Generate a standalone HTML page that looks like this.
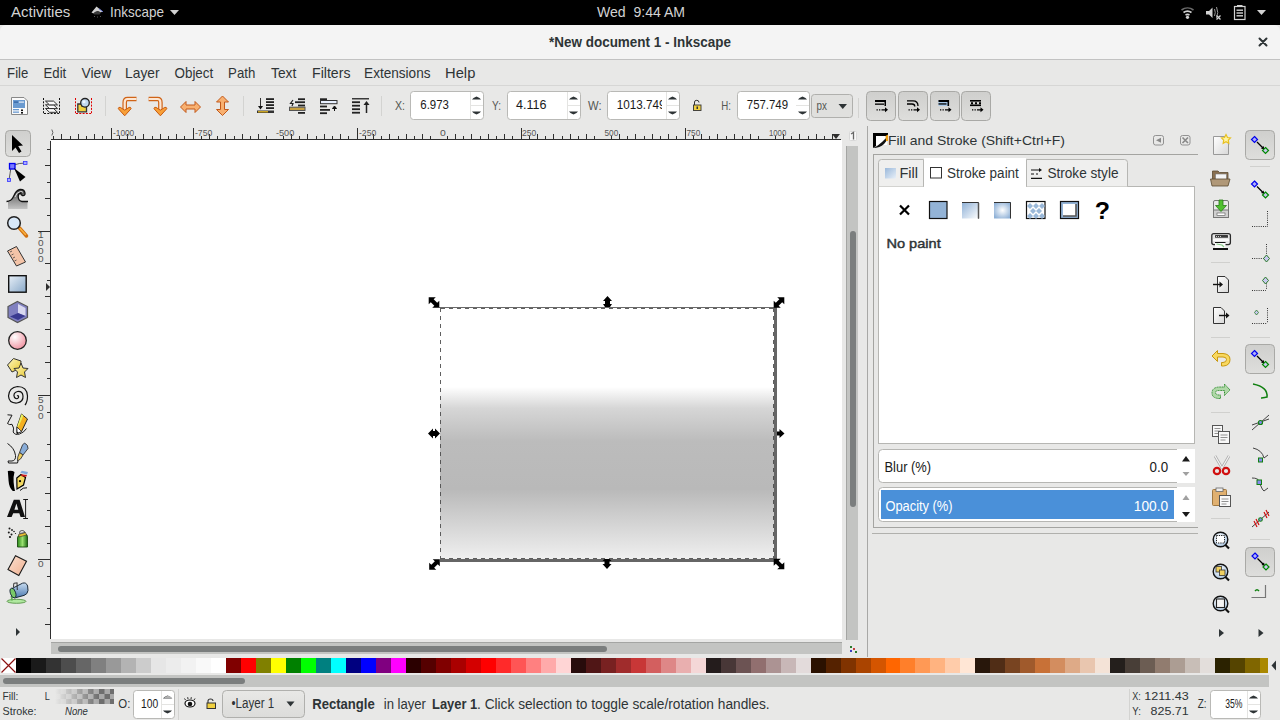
<!DOCTYPE html>
<html><head><meta charset="utf-8"><style>
*{margin:0;padding:0}
html,body{width:1280px;height:720px;overflow:hidden;background:#e8e8e7}
svg{position:absolute;left:0;top:0;font-family:"Liberation Sans",sans-serif}
</style></head><body>
<svg width="1280" height="720" viewBox="0 0 1280 720">
<rect x="0" y="0" width="1280" height="25" fill="#000" />
<text x="11.00" y="17" font-size="14.5" fill="#d3d3d3" textLength="59.26" lengthAdjust="spacingAndGlyphs" >Activities</text>
<text x="110.07" y="17" font-size="14.5" fill="#d3d3d3" textLength="53.99" lengthAdjust="spacingAndGlyphs" >Inkscape</text>
<path d="M170 10 L179 10 L174.5 15 Z" fill="#d3d3d3"/>
<path d="M91.5 12.5 L96.5 6.5 L102.5 11.5 L100.5 12.5 Q97 9.5 93.5 13.5 Z" fill="#d0d0d0"/><path d="M99 8.8 L103 11.8" stroke="#6a78d8" stroke-width="1"/><path d="M93 13.5 Q97 10 101 12.5 L99.5 14.5 L94.5 14.5Z" fill="#3a3a3a"/><g fill="#555"><rect x="94" y="16" width="1" height="1"/><rect x="97" y="16.5" width="1" height="1"/><rect x="100" y="16" width="1" height="1"/></g>
<text x="597.00" y="17" font-size="14.5" fill="#d3d3d3" textLength="88.04" lengthAdjust="spacingAndGlyphs" >Wed  9:44 AM</text>
<g fill="none" stroke="#d3d3d3" stroke-width="1.6"><path d="M1181.5 10 A10 10 0 0 1 1193.5 10" opacity=".5"/><path d="M1183.5 12.5 A7 7 0 0 1 1191.5 12.5"/><path d="M1185.5 15 A4 4 0 0 1 1189.5 15"/></g><circle cx="1187.5" cy="17.3" r="1.6" fill="#d3d3d3"/>
<path d="M1206 11 L1209 11 L1212.5 7.5 L1212.5 18 L1209 14.5 L1206 14.5Z" fill="#d3d3d3"/><path d="M1214.5 9 Q1216 12.5 1214.5 16 M1216.5 7 Q1219 12.5 1216.5 18" stroke="#999" stroke-width="1" fill="none"/><path d="M1216.5 15.5 L1220.5 19.5 M1220.5 15.5 L1216.5 19.5" stroke="#d3d3d3" stroke-width="1.3"/>
<rect x="1234.5" y="6.5" width="10.5" height="13" fill="none" stroke="#d3d3d3" stroke-width="1.2"/><rect x="1237" y="5" width="5.5" height="2" fill="#d3d3d3"/><rect x="1236.5" y="9.5" width="6.5" height="1.4" fill="#d3d3d3"/><rect x="1236.5" y="12.3" width="6.5" height="1.4" fill="#d3d3d3"/><rect x="1236.5" y="15.1" width="6.5" height="1.4" fill="#d3d3d3"/>
<path d="M1257 10 L1266 10 L1261.5 15 Z" fill="#d3d3d3"/>
<path d="M0 31 A6 6 0 0 1 6 25 L1274 25 A6 6 0 0 1 1280 31 L1280 59 L0 59 Z" fill="#f4f4f4"/>
<rect x="0" y="59" width="1280" height="1" fill="#c2c2c2" />
<text x="549.00" y="47" font-size="14.3" fill="#2e3436" font-weight="bold" textLength="181.95" lengthAdjust="spacingAndGlyphs" >*New document 1 - Inkscape</text>
<path d="M1259.5 38.5 L1266.5 45.5 M1266.5 38.5 L1259.5 45.5" stroke="#2e3436" stroke-width="2" stroke-linecap="round"/>
<rect x="0" y="60" width="1280" height="25" fill="#e8e8e7" />
<text x="7.12" y="78" font-size="15" fill="#2e3436" textLength="21.18" lengthAdjust="spacingAndGlyphs" >File</text>
<text x="43.62" y="78" font-size="15" fill="#2e3436" textLength="22.65" lengthAdjust="spacingAndGlyphs" >Edit</text>
<text x="81.50" y="78" font-size="15" fill="#2e3436" textLength="29.84" lengthAdjust="spacingAndGlyphs" >View</text>
<text x="125.08" y="78" font-size="15" fill="#2e3436" textLength="34.41" lengthAdjust="spacingAndGlyphs" >Layer</text>
<text x="174.50" y="78" font-size="15" fill="#2e3436" textLength="38.76" lengthAdjust="spacingAndGlyphs" >Object</text>
<text x="228.12" y="78" font-size="15" fill="#2e3436" textLength="27.18" lengthAdjust="spacingAndGlyphs" >Path</text>
<text x="271.00" y="78" font-size="15" fill="#2e3436" textLength="25.24" lengthAdjust="spacingAndGlyphs" >Text</text>
<text x="312.06" y="78" font-size="15" fill="#2e3436" textLength="38.41" lengthAdjust="spacingAndGlyphs" >Filters</text>
<text x="364.10" y="78" font-size="15" fill="#2e3436" textLength="66.36" lengthAdjust="spacingAndGlyphs" >Extensions</text>
<text x="445.02" y="78" font-size="15" fill="#2e3436" textLength="30.32" lengthAdjust="spacingAndGlyphs" >Help</text>
<rect x="0" y="85" width="1280" height="1" fill="#d6d6d5" />
<rect x="105" y="96" width="1" height="20" fill="#d3d3d1" />
<rect x="243" y="96" width="1" height="20" fill="#d3d3d1" />
<rect x="381" y="96" width="1" height="20" fill="#d3d3d1" />
<rect x="858" y="98" width="1" height="20" fill="#d3d3d1" />
<path d="M11.5 97.5 L24 97.5 L27.5 101 L27.5 114.5 L11.5 114.5 Z" fill="#fafafa" stroke="#888" stroke-width="1"/>
<rect x="13" y="100" width="12" height="8" fill="#6a9ad0" />
<rect x="14" y="101.5" width="4" height="1.2" fill="#2f5f9f" />
<rect x="19" y="101.5" width="5" height="1.2" fill="#e8eef8" />
<rect x="13" y="109" width="6" height="1.3" fill="#6a9ad0" />
<rect x="13" y="111.5" width="6" height="1.3" fill="#6a9ad0" />
<rect x="21" y="109.5" width="2" height="1.6" fill="#111" />
<rect x="21" y="112" width="2" height="1.6" fill="#111" />
<path d="M43.5 98 V114 M59.5 98 V114 M44 113.5 H59" stroke="#111" stroke-width="1" stroke-dasharray="2,1.3" fill="none"/>
<path d="M45.5 108.5 L53.5 108.5 L57.5 112.3 L49.5 112.3 Z" fill="#fafafa" stroke="#1a1a1a" stroke-width="0.9"/>
<path d="M45.5 104.8 L53.5 104.8 L57.5 108.6 L49.5 108.6 Z" fill="#fafafa" stroke="#1a1a1a" stroke-width="0.9"/>
<path d="M45.5 101.1 L53.5 101.1 L57.5 104.89999999999999 L49.5 104.89999999999999 Z" fill="#fafafa" stroke="#1a1a1a" stroke-width="0.9"/>
<path d="M75.5 98 V114 M91.5 98 V114 M76 113.5 H91" stroke="#e00000" stroke-width="1" stroke-dasharray="2,1.3" fill="none"/>
<path d="M77.8 104 L82 104 L82 106 L86.5 106 L86.5 111.8 L77.8 111.8 Z" fill="#f0d040" stroke="#333" stroke-width="1.3"/>
<circle cx="85" cy="102.8" r="4.3" fill="#c0d8f0" stroke="#222" stroke-width="1.3"/><circle cx="84" cy="101.8" r="1.5" fill="#eef6ff"/>
<g><path d="M136.5 99 L127.5 99 Q124.7 99 124.7 102.5 L124.7 109.5" stroke="#d06418" stroke-width="4.6" fill="none"/><path d="M136.5 99 L127.5 99 Q124.7 99 124.7 102.5 L124.7 109.5" stroke="#fde6d2" stroke-width="2.2" fill="none"/><path d="M118.3 108.7 Q118.5 106.8 120.3 107.4 L124.7 110.2 L129.1 107.4 Q130.9 106.8 131.1 108.7 L124.7 115.8 Z" fill="#f8a038" stroke="#c85a10" stroke-width="1"/></g>
<g transform="matrix(-1 0 0 1 285.1 0)"><path d="M136.5 99 L127.5 99 Q124.7 99 124.7 102.5 L124.7 109.5" stroke="#d06418" stroke-width="4.6" fill="none"/><path d="M136.5 99 L127.5 99 Q124.7 99 124.7 102.5 L124.7 109.5" stroke="#fde6d2" stroke-width="2.2" fill="none"/><path d="M118.3 108.7 Q118.5 106.8 120.3 107.4 L124.7 110.2 L129.1 107.4 Q130.9 106.8 131.1 108.7 L124.7 115.8 Z" fill="#f8a038" stroke="#c85a10" stroke-width="1"/></g>
<path d="M180.5 107 L186 101.5 L186 105 L195 105 L195 101.5 L200.5 107 L195 112.5 L195 109 L186 109 L186 112.5 Z" stroke="#c2591a" stroke-width="1" fill="#f8b070"/>
<path d="M222.5 96 L228.5 102 L224.5 102 L224.5 109.5 L228.5 109.5 L222.5 115.5 L216.5 109.5 L220.5 109.5 L220.5 102 L216.5 102 Z" stroke="#c2591a" stroke-width="1" fill="#f8b070"/>
<path d="M260.5 98 L260.5 107" stroke="#333" stroke-width="1"/><path d="M258 106 L263 106 L260.5 109.5Z" fill="#111"/>
<rect x="266" y="98.2" width="8" height="1.8" fill="#222" />
<rect x="266" y="101.2" width="8" height="1.8" fill="#222" />
<rect x="266" y="104.2" width="8" height="1.8" fill="#222" />
<rect x="266" y="107.2" width="8" height="1.8" fill="#222" />
<rect x="257" y="110.5" width="17" height="2.5" fill="#333" />
<rect x="258" y="111.2" width="10" height="1.2" fill="#f0c020" />
<rect x="298" y="98.3" width="7" height="1.8" fill="#222" />
<rect x="295" y="101.3" width="10" height="1.8" fill="#222" />
<rect x="298" y="104.6" width="7" height="1.8" fill="#222" />
<rect x="298" y="112" width="7" height="1.8" fill="#222" />
<rect x="289.5" y="107.2" width="15.5" height="3.3" fill="#c8a040" stroke="#555" stroke-width="1"/>
<path d="M293 100 L290.5 103.5 L293 103.5 L292 106" stroke="#222" stroke-width="1.2" fill="none"/>
<rect x="320" y="98.3" width="7" height="1.8" fill="#222" />
<rect x="320" y="105.6" width="7" height="1.8" fill="#222" />
<rect x="320" y="109" width="10" height="1.8" fill="#222" />
<rect x="320" y="112.3" width="7" height="1.8" fill="#222" />
<rect x="320.5" y="100.5" width="16.5" height="3.2" fill="#e8f0ff" stroke="#333" stroke-width="1"/>
<path d="M334.5 106 L336.5 108.5 L332.5 108.5 Z M334.5 108 L334.5 111" fill="#111" stroke="#111" stroke-width="1"/>
<rect x="352" y="98" width="17" height="1.5" fill="#3a3a3a" />
<rect x="352" y="101.3" width="8" height="1.8" fill="#222" />
<rect x="352" y="104.8" width="8" height="1.8" fill="#222" />
<rect x="352" y="108.3" width="8" height="1.8" fill="#222" />
<rect x="352" y="111.8" width="8" height="1.8" fill="#222" />
<path d="M366.5 113 L366.5 104" stroke="#222" stroke-width="1.5"/><path d="M363.5 105 L369.5 105 L366.5 101Z" fill="#222"/>
<rect x="410.5" y="91.5" width="73" height="28" rx="3" fill="#fff" stroke="#b9b9b6" stroke-width="1"/>
<rect x="470" y="92" width="1" height="27" fill="#e4e4e2" />
<rect x="470" y="105" width="13" height="1" fill="#e4e4e2" />
<path d="M472.0 99.5 L481.0 99.5 L479.5 98 L476.5 96.5 L473.5 98 Z" fill="#2e3436"/>
<path d="M472.0 111.5 L481.0 111.5 L479.5 113 L476.5 114.5 L473.5 113 Z" fill="#2e3436"/>
<rect x="507.5" y="91.5" width="73" height="28" rx="3" fill="#fff" stroke="#b9b9b6" stroke-width="1"/>
<rect x="567" y="92" width="1" height="27" fill="#e4e4e2" />
<rect x="567" y="105" width="13" height="1" fill="#e4e4e2" />
<path d="M569.0 99.5 L578.0 99.5 L576.5 98 L573.5 96.5 L570.5 98 Z" fill="#2e3436"/>
<path d="M569.0 111.5 L578.0 111.5 L576.5 113 L573.5 114.5 L570.5 113 Z" fill="#2e3436"/>
<rect x="607.5" y="91.5" width="72" height="28" rx="3" fill="#fff" stroke="#b9b9b6" stroke-width="1"/>
<rect x="666" y="92" width="1" height="27" fill="#e4e4e2" />
<rect x="666" y="105" width="13" height="1" fill="#e4e4e2" />
<path d="M668.0 99.5 L677.0 99.5 L675.5 98 L672.5 96.5 L669.5 98 Z" fill="#2e3436"/>
<path d="M668.0 111.5 L677.0 111.5 L675.5 113 L672.5 114.5 L669.5 113 Z" fill="#2e3436"/>
<rect x="737.5" y="91.5" width="72" height="28" rx="3" fill="#fff" stroke="#b9b9b6" stroke-width="1"/>
<rect x="796" y="105" width="13" height="1" fill="#e4e4e2" />
<path d="M798.0 99.5 L807.0 99.5 L805.5 98 L802.5 96.5 L799.5 98 Z" fill="#2e3436"/>
<path d="M798.0 111.5 L807.0 111.5 L805.5 113 L802.5 114.5 L799.5 113 Z" fill="#2e3436"/>
<text x="395.00" y="110" font-size="13" fill="#555753" textLength="10.00" lengthAdjust="spacingAndGlyphs" >X:</text>
<text x="492.00" y="110" font-size="13" fill="#555753" textLength="8.97" lengthAdjust="spacingAndGlyphs" >Y:</text>
<text x="588.00" y="110" font-size="13" fill="#555753" textLength="13.53" lengthAdjust="spacingAndGlyphs" >W:</text>
<text x="721.25" y="110" font-size="13" fill="#555753" textLength="9.70" lengthAdjust="spacingAndGlyphs" >H:</text>
<text x="420.30" y="109" font-size="13.5" fill="#1a1a1a" textLength="28.63" lengthAdjust="spacingAndGlyphs" >6.973</text>
<text x="516.00" y="109" font-size="13.5" fill="#1a1a1a" textLength="30.47" lengthAdjust="spacingAndGlyphs" >4.116</text>
<text x="616.63" y="109" font-size="13.5" fill="#1a1a1a" textLength="48.81" lengthAdjust="spacingAndGlyphs" >1013.749</text>
<text x="746.80" y="109" font-size="13.5" fill="#1a1a1a" textLength="41.23" lengthAdjust="spacingAndGlyphs" >757.749</text>
<rect x="662" y="93" width="4" height="25" fill="#fff" />
<path d="M694.5 105 L694.5 102 Q694.5 100.3 696.8 100.3 Q699 100.3 699 102.5" fill="none" stroke="#333" stroke-width="1"/>
<rect x="693.5" y="105" width="7.5" height="5.5" fill="#f0d040" stroke="#333" stroke-width=".9"/><rect x="696.5" y="106.5" width="1.5" height="2.5" fill="#333"/>
<rect x="811.5" y="94.5" width="41" height="23" rx="3" fill="#e0e0de" stroke="#b0b0ad" stroke-width="1"/>
<text x="816.40" y="109.5" font-size="13.5" fill="#555753" textLength="10.42" lengthAdjust="spacingAndGlyphs" >px</text>
<path d="M838.5 104 L847 104 L842.75 109 Z" fill="#2e3436"/>
<rect x="866.5" y="91.5" width="29" height="29" rx="4" fill="url(#btng)" stroke="#a9a9a6" stroke-width="1"/>
<rect x="898.5" y="91.5" width="29" height="29" rx="4" fill="url(#btng)" stroke="#a9a9a6" stroke-width="1"/>
<rect x="930.5" y="91.5" width="29" height="29" rx="4" fill="url(#btng)" stroke="#a9a9a6" stroke-width="1"/>
<rect x="961.5" y="91.5" width="29" height="29" rx="4" fill="url(#btng)" stroke="#a9a9a6" stroke-width="1"/>
<defs><linearGradient id="btng" x1="0" y1="0" x2="0" y2="1"><stop offset="0" stop-color="#cfcfcd"/><stop offset="1" stop-color="#dededc"/></linearGradient></defs>
<rect x="875" y="100" width="11" height="2" fill="#000" />
<rect x="875" y="103.5" width="9" height="1.3" fill="#000" />
<rect x="884.5" y="100" width="1.5" height="6" fill="#000" />
<path d="M876.5 109.8 h1.3 M879.0 109.8 h1.3 M881.5 109.8 h4" stroke="#000" stroke-width="1.3"/><path d="M885.0 107.3 L888.0 109.8 L885.0 112.3Z" fill="#000"/>
<path d="M907 100.8 L913 100.8 Q918 100.8 918 106 M907 104 L912 104 Q914.8 104 914.8 106.5" fill="none" stroke="#000" stroke-width="1.3"/>
<path d="M908.5 109.8 h1.3 M911.0 109.8 h1.3 M913.5 109.8 h4" stroke="#000" stroke-width="1.3"/><path d="M917.0 107.3 L920.0 109.8 L917.0 112.3Z" fill="#000"/>
<rect x="938.5" y="100" width="10.5" height="6" fill="#a8c8e8"/>
<rect x="938.5" y="100" width="10.5" height="2" fill="#000" />
<rect x="938.5" y="103.3" width="8" height="1.3" fill="#000" />
<rect x="947.5" y="100" width="1.6" height="6" fill="#000" />
<path d="M940 109.8 h1.3 M942.5 109.8 h1.3 M945 109.8 h4" stroke="#000" stroke-width="1.3"/><path d="M948.5 107.3 L951.5 109.8 L948.5 112.3Z" fill="#000"/>
<rect x="970" y="100" width="11" height="1.6" fill="#000" />
<rect x="970" y="104.5" width="11" height="1.6" fill="#000" />
<path d="M971 103.3 h2 M975 103.3 h2 M979 103.3 h2" stroke="#000" stroke-width="2"/>
<path d="M972 109.8 h1.3 M974.5 109.8 h1.3 M977 109.8 h4" stroke="#000" stroke-width="1.3"/><path d="M980.5 107.3 L983.5 109.8 L980.5 112.3Z" fill="#000"/>
<rect x="51" y="140" width="791" height="499" fill="#fff" />
<rect x="51" y="139" width="790" height="1" fill="#2e2e2e" />
<rect x="50" y="141" width="1" height="498" fill="#2e2e2e" />
<path d="M53.5 136 V139 M61.5 134 V139 M70.5 136 V139 M78.5 134 V139 M86.5 136 V139 M94.5 134 V139 M102.5 136 V139 M111.5 128 V139 M119.5 136 V139 M127.5 134 V139 M135.5 136 V139 M143.5 134 V139 M152.5 136 V139 M160.5 134 V139 M168.5 136 V139 M176.5 134 V139 M184.5 136 V139 M193.5 128 V139 M201.5 136 V139 M209.5 134 V139 M217.5 136 V139 M225.5 134 V139 M234.5 136 V139 M242.5 134 V139 M250.5 136 V139 M258.5 134 V139 M266.5 136 V139 M283.5 136 V139 M291.5 134 V139 M299.5 136 V139 M307.5 134 V139 M316.5 136 V139 M324.5 134 V139 M332.5 136 V139 M340.5 134 V139 M348.5 136 V139 M357.5 128 V139 M365.5 136 V139 M373.5 134 V139 M381.5 136 V139 M389.5 134 V139 M398.5 136 V139 M406.5 134 V139 M414.5 136 V139 M422.5 134 V139 M430.5 136 V139 M447.5 136 V139 M455.5 134 V139 M463.5 136 V139 M471.5 134 V139 M480.5 136 V139 M488.5 134 V139 M496.5 136 V139 M504.5 134 V139 M512.5 136 V139 M521.5 128 V139 M529.5 136 V139 M537.5 134 V139 M545.5 136 V139 M553.5 134 V139 M562.5 136 V139 M570.5 134 V139 M578.5 136 V139 M586.5 134 V139 M594.5 136 V139 M611.5 136 V139 M619.5 134 V139 M627.5 136 V139 M635.5 134 V139 M644.5 136 V139 M652.5 134 V139 M660.5 136 V139 M668.5 134 V139 M676.5 136 V139 M685.5 128 V139 M693.5 136 V139 M701.5 134 V139 M709.5 136 V139 M717.5 134 V139 M726.5 136 V139 M734.5 134 V139 M742.5 136 V139 M750.5 134 V139 M758.5 136 V139 M775.5 136 V139 M783.5 134 V139 M791.5 136 V139 M799.5 134 V139 M808.5 136 V139 M816.5 134 V139 M824.5 136 V139 M832.5 134 V139" stroke="#2e2e2e" stroke-width="1"/>
<text x="113.00" y="136" font-size="9.5" fill="#555555" textLength="21.25" lengthAdjust="spacingAndGlyphs" >-1000</text>
<text x="195.00" y="136" font-size="9.5" fill="#555555" textLength="17.26" lengthAdjust="spacingAndGlyphs" >-750</text>
<text x="276.00" y="136" font-size="9.5" fill="#555555" textLength="18.27" lengthAdjust="spacingAndGlyphs" >-500</text>
<text x="359.00" y="136" font-size="9.5" fill="#555555" textLength="17.26" lengthAdjust="spacingAndGlyphs" >-250</text>
<text x="440.00" y="136" font-size="9.5" fill="#555555" textLength="5.81" lengthAdjust="spacingAndGlyphs" >0</text>
<text x="522.00" y="136" font-size="9.5" fill="#555555" textLength="14.25" lengthAdjust="spacingAndGlyphs" >250</text>
<text x="604.50" y="136" font-size="9.5" fill="#555555" textLength="13.75" lengthAdjust="spacingAndGlyphs" >500</text>
<text x="686.50" y="136" font-size="9.5" fill="#555555" textLength="13.75" lengthAdjust="spacingAndGlyphs" >750</text>
<text x="769.00" y="136" font-size="9.5" fill="#555555" textLength="17.23" lengthAdjust="spacingAndGlyphs" >1000</text>
<path d="M51.8 129.5 Q54 132.5 51.8 135.5" stroke="#666" stroke-width="1" fill="none"/>
<path d="M832 134 L840 134 L836 139 Z" fill="#2e2e2e"/>
<path d="M47 149.5 H50 M45 165.5 H50 M47 182.5 H50 M45 198.5 H50 M47 215.5 H50 M38 231.5 H50 M45 263.5 H50 M47 280.5 H50 M45 296.5 H50 M47 313.5 H50 M45 329.5 H50 M47 346.5 H50 M45 362.5 H50 M47 378.5 H50 M38 395.5 H50 M47 412.5 H50 M47 444.5 H50 M45 460.5 H50 M47 477.5 H50 M45 493.5 H50 M47 510.5 H50 M45 526.5 H50 M47 543.5 H50 M38 559.5 H50 M47 576.5 H50 M47 608.5 H50 M45 624.5 H50" stroke="#2e2e2e" stroke-width="1"/>
<text x="38.00" y="238" font-size="9.5" fill="#555555" textLength="5.60" lengthAdjust="spacingAndGlyphs" >1</text>
<text x="38.00" y="246" font-size="9.5" fill="#555555" textLength="5.60" lengthAdjust="spacingAndGlyphs" >0</text>
<text x="38.00" y="254" font-size="9.5" fill="#555555" textLength="5.60" lengthAdjust="spacingAndGlyphs" >0</text>
<text x="38.00" y="262" font-size="9.5" fill="#555555" textLength="5.60" lengthAdjust="spacingAndGlyphs" >0</text>
<text x="38.00" y="403" font-size="9.5" fill="#555555" textLength="5.60" lengthAdjust="spacingAndGlyphs" >5</text>
<text x="38.00" y="411" font-size="9.5" fill="#555555" textLength="5.60" lengthAdjust="spacingAndGlyphs" >0</text>
<text x="38.00" y="419" font-size="9.5" fill="#555555" textLength="5.60" lengthAdjust="spacingAndGlyphs" >0</text>
<text x="38.00" y="567" font-size="9.5" fill="#555555" textLength="5.60" lengthAdjust="spacingAndGlyphs" >0</text>
<path d="M46 283 L46 291 L50 287 Z" fill="#2e2e2e"/>
<rect x="849.5" y="131.5" width="7" height="9" rx="1" fill="#f8f8f8" stroke="#d8d8d8" stroke-width="1"/><path d="M851 134 L853.5 132.5 L853.5 139.5" stroke="#666" stroke-width="1.3" fill="none"/>
<rect x="846" y="146" width="12" height="494" fill="#c3c4c2" />
<rect x="846" y="146" width="1" height="494" fill="#a4a5a3" />
<rect x="850" y="231" width="6" height="276" rx="3" fill="#7b7e7e"/>
<rect x="51" y="642" width="791" height="12" fill="#c3c4c2" />
<rect x="51" y="642" width="791" height="1" fill="#a4a5a3" />
<rect x="58" y="646" width="549" height="6" rx="3" fill="#7b7e7e"/>
<g fill="#2a7a2a"><rect x="850" y="646" width="2" height="2"/><rect x="853" y="648" width="2" height="2" fill="#c04040"/><rect x="850" y="650" width="2" height="2" fill="#4040c0"/><rect x="855" y="651" width="2" height="2"/></g>
<defs><linearGradient id="rg" gradientUnits="userSpaceOnUse" x1="0" y1="307" x2="0" y2="560"><stop offset="0" stop-color="#fff"/><stop offset="0.316" stop-color="#fff"/><stop offset="0.40" stop-color="#d6d6d6"/><stop offset="0.53" stop-color="#bcbcbc"/><stop offset="0.72" stop-color="#b9b9b9"/><stop offset="0.99" stop-color="#eeeeee"/></linearGradient></defs>
<rect x="440" y="307" width="335" height="253" fill="url(#rg)" />
<rect x="439" y="307" width="337" height="1" fill="#6a6a6a" />
<rect x="774" y="307" width="3" height="254" fill="#666" />
<rect x="440" y="559" width="337" height="3" fill="#666" />
<path d="M440.5 308 V559 M441 308.5 H773 M773.5 308 V559 M441 558.5 H773" stroke="#444" stroke-width="1" stroke-dasharray="4,4" fill="none" opacity="0.85"/>
<path transform="translate(434 433.5) rotate(90)" d="M0 -6 L5 -1 L2.5 -1 L2.5 1 L5 1 L0 6 L-5 1 L-2.5 1 L-2.5 -1 L-5 -1 Z" fill="#000"/>
<path d="M607.5 296 L612 301 L610 301 L610 304 L612 304 L610 307 L605 307 L603 304 L605 304 L605 301 L603 301 Z" fill="#000"/>
<path d="M607 569 L611.5 564 L609.5 564 L609.5 561 L611.5 561 L609.5 559 L604.5 559 L602.5 561 L604.5 561 L604.5 564 L602.5 564 Z" fill="#000"/>
<path d="M784.5 433.5 L779.5 429 L779.5 431.5 L777 431.5 L777 435.5 L779.5 435.5 L779.5 438 Z" fill="#000"/>
<path transform="translate(434 302.5) rotate(-45)" d="M0 -7.5 L5 -2.5 L2 -2.5 L2 2.5 L5 2.5 L0 7.5 L-5 2.5 L-2 2.5 L-2 -2.5 L-5 -2.5 Z" fill="#000"/>
<path transform="translate(779 302.5) rotate(45)" d="M0 -7.5 L5 -2.5 L2 -2.5 L2 2.5 L5 2.5 L0 7.5 L-5 2.5 L-2 2.5 L-2 -2.5 L-5 -2.5 Z" fill="#000"/>
<path transform="translate(434.5 564.5) rotate(45)" d="M0 -7.5 L5 -2.5 L2 -2.5 L2 2.5 L5 2.5 L0 7.5 L-5 2.5 L-2 2.5 L-2 -2.5 L-5 -2.5 Z" fill="#000"/>
<path transform="translate(779 564) rotate(-45)" d="M0 -7.5 L5 -2.5 L2 -2.5 L2 2.5 L5 2.5 L0 7.5 L-5 2.5 L-2 2.5 L-2 -2.5 L-5 -2.5 Z" fill="#000"/>
<defs><linearGradient id="gblue" x1="0" y1="0" x2="1" y2="1"><stop offset="0" stop-color="#e8f0f8"/><stop offset="1" stop-color="#88a8c8"/></linearGradient><linearGradient id="gwave" x1="0" y1="0" x2="0" y2="1"><stop offset="0" stop-color="#555"/><stop offset="1" stop-color="#ddd"/></linearGradient><radialGradient id="gpink" cx="0.35" cy="0.3" r="0.8"><stop offset="0" stop-color="#fff"/><stop offset="1" stop-color="#f08a9a"/></radialGradient><linearGradient id="gyel" x1="0" y1="0" x2="1" y2="1"><stop offset="0" stop-color="#fff8c0"/><stop offset="1" stop-color="#e8c830"/></linearGradient><linearGradient id="ggreen" x1="0" y1="0" x2="1" y2="0"><stop offset="0" stop-color="#2a8a1a"/><stop offset=".5" stop-color="#9ae070"/><stop offset="1" stop-color="#1a6a10"/></linearGradient></defs>
<rect x="5.5" y="130.5" width="25" height="26" rx="4" fill="url(#btng)" stroke="#a9a9a6" stroke-width="1"/>
<path d="M12 135 L12 151 L15.5 147.5 L19 153 L21.5 151.5 L18.2 146 L23 145.5 Z" fill="#000"/>
<path d="M11 167 Q10 174 9 180 M14 165 Q19 163 25.5 163" stroke="#333" stroke-width="0.8" fill="none"/>
<rect x="9.5" y="163.5" width="5.5" height="5.5" fill="#7a7aff" stroke="#0000ee" stroke-width="1.3"/>
<rect x="23.5" y="161.5" width="3.5" height="3" fill="#aaf" stroke="#33f" stroke-width=".8"/><rect x="7.5" y="178.5" width="3" height="3" fill="#aaf" stroke="#33f" stroke-width=".8"/>
<path d="M14 168 L25.5 177 L20 181.5 Z" fill="#000"/>
<defs><linearGradient id="gtw" x1="0" y1="0" x2="0" y2="1"><stop offset="0" stop-color="#3a3a3a"/><stop offset=".5" stop-color="#8a8a8a"/><stop offset="1" stop-color="#c4c4c4"/></linearGradient></defs>
<path d="M8 202 Q11.5 202 13.5 196.5 Q16 190 20 189.3 Q24.5 189 25 193 Q25.3 196 22.5 195.5 Q20.5 195 21 193 Q18 193.5 18.2 197 Q18.5 201 22 202 L27.5 202 L27.5 209 L8 209 Z" fill="url(#gtw)"/>
<path d="M6.5 201.5 Q11.5 201.5 13.5 196.5 Q16 190 20 189.3 Q24.5 189 25 193 Q25.3 196 22.5 195.5 Q20.5 195 21 193 Q18 193.5 18.2 197 Q18.5 201 22 201.5 L28 201.5" stroke="#111" stroke-width="1.3" fill="none"/>
<path d="M15 197 Q16.8 191.8 20.5 191.5 Q22.5 191.5 23 192.5" stroke="#eee" stroke-width=".9" fill="none"/>
<path d="M19.5 228 L26.5 236" stroke="#d07010" stroke-width="3.5" stroke-linecap="round"/><path d="M20 228.5 L25.5 234.5" stroke="#f8b040" stroke-width="1.6" stroke-linecap="round"/>
<circle cx="14" cy="223" r="6.3" fill="#d8e8f8" stroke="#222" stroke-width="1.5"/>
<path d="M7.5 251 L16.5 246.5 L25.5 262 L16.5 266 Z" fill="#f4c4a8" stroke="#333" stroke-width="1"/><path d="M10 252 l2 -1 M11.5 255 l2 -1 M13 258 l2 -1 M14.5 261 l2 -1" stroke="#444" stroke-width=".8"/>
<rect x="8.7" y="275.7" width="17.5" height="16.5" fill="url(#gblue)" stroke="#111" stroke-width="1.4"/>
<path d="M17.5 301.5 L27.5 306.5 L27.5 317.5 L17.5 322.5 L8 317.5 L8 306.5 Z" fill="#8080c0" stroke="#555" stroke-width="1.2"/>
<path d="M18 304 L25.5 308 L25.5 316 L18 313 Z" fill="#d8d8f0"/><path d="M10 316.5 L18 313 L25.5 316 L18 320 Z" fill="#3a3a90"/>
<circle cx="17.5" cy="340.5" r="8.8" fill="url(#gpink)" stroke="#222" stroke-width="1.3"/>
<path d="M13.5 358.5 L21 361 L20.5 368 L12 372 L7.5 365 Z" fill="url(#gyel)" stroke="#333" stroke-width="1"/>
<path d="M21 363 L23 368 L28 368.5 L24.5 372 L25.5 377.5 L21 375 L16.5 377.5 L17.5 372 L14 368.5 L19 368 Z" fill="url(#gyel)" stroke="#333" stroke-width="1"/>
<path d="M17 396 Q19 395 18.5 397.5 Q17 400 14.5 397.5 Q12.5 393 17.5 391.5 Q22.5 391 23 396 Q23.5 402 17 403 Q9 403.5 8.5 396 Q9 387.5 17.5 386.5 Q27 386.5 27.5 396 Q27.5 402 25 405" stroke="#111" stroke-width="1.2" fill="none"/>
<path d="M7.5 414.8 L12 415.2 L7.5 423.5 Q9.5 425.3 12 424.3 Q14.5 428 13.2 432 Q15 435.5 19.5 434 M19.5 434 Q24 432.5 26.5 428.5" stroke="#1a1a1a" stroke-width="1" fill="none"/>
<path d="M21.5 414 L27.5 419 L21.5 431.5 L17 433.5 L17 427 Z" fill="#f4b020" stroke="#222" stroke-width="1"/><path d="M21.5 414 L23.5 415.6 L18.6 426.5 L17 427Z" fill="#e8f060"/>
<path d="M17 427 L21.5 431.5 L17 433.5 Z" fill="#fff" stroke="#222" stroke-width=".8"/><path d="M17 431.5 L18.5 433 L17 433.6Z" fill="#000"/>
<path d="M7.5 443.5 Q14.5 448 15.5 455.5 Q16 460.5 12 461 L8 461 L8.5 463 L17.5 463 L18 461" stroke="#1a1a1a" stroke-width="1" fill="none"/>
<path d="M24.5 443 Q28.5 445 28 448.5 L23 455 L19.5 452.5 L22.5 445 Z" fill="#88acd8" stroke="#333" stroke-width=".9"/><path d="M19.5 452.5 L23 455 L20.5 459 L17.5 461 L17.8 457 Z" fill="#f0d060" stroke="#333" stroke-width=".9"/>
<path d="M7.8 471 Q12 470 14.5 472 Q13.3 476 13.6 482 Q14 487 15 491 L12.8 491 Q9 487.5 8.6 481 Q8.2 475.5 7.8 471 Z" fill="#000"/>
<path d="M16.8 478 L21 474.5 L25.5 477.5 L23.5 485 L17 489 Z" fill="#f2d860" stroke="#000" stroke-width="1.2"/><circle cx="20" cy="481.2" r="1.1" fill="#000"/>
<path d="M20.3 472.8 L21.8 470.8 L28 472 L27 474.6 Z" fill="#80a8d8"/><path d="M21 474.2 L27 474.9 L26.2 476.8 L21.6 476.2Z" fill="#d01818"/>
<path d="M20 490.5 Q23 487.2 27 487.8" stroke="#111" stroke-width="1" fill="none"/>
<path d="M7 517 L13.8 499.8 L19.6 499.8 L25 517 L20.6 517 L19.3 513.2 L13.2 513.2 L11.6 517 Z M14.4 509.8 L18.3 509.8 L16.4 503.5 Z" fill="#111" fill-rule="evenodd"/>
<path d="M23.2 499.5 H28 M25.6 499.5 V518.5 M23.2 518.5 H28" stroke="#1a1a1a" stroke-width="1"/>
<g fill="#1a1a1a"><circle cx="9.5" cy="528.5" r="1"/><circle cx="12" cy="530" r=".9"/><circle cx="8.8" cy="532.5" r="1"/><circle cx="14" cy="531.5" r=".8"/><circle cx="11.5" cy="534.5" r="1"/><circle cx="10" cy="537" r="1.1"/><circle cx="15.5" cy="533.5" r=".6"/></g>
<path d="M17.5 538 Q17.5 535.5 20 535 L25 534 Q27.5 534 27.5 537 L27.5 547 L17.5 547 Z" fill="url(#ggreen)" stroke="#1a4a10" stroke-width=".9"/>
<path d="M18.5 534.5 L25.5 532.5 L26.5 535 L19 537 Z" fill="#e8c030" stroke="#333" stroke-width=".6"/><path d="M19.5 533.5 Q19 530.5 22 530.5 Q24.5 530.5 25 532.5 Z" fill="#eee" stroke="#333" stroke-width=".8"/>
<defs><linearGradient id="gera" x1="0" y1="0" x2="1" y2="1"><stop offset="0" stop-color="#fbe0d0"/><stop offset="1" stop-color="#f0b090"/></linearGradient></defs>
<path d="M8 569.5 L15.5 555.8 L26.5 561.2 L18.8 575.5 Z" fill="url(#gera)" stroke="#1a1a1a" stroke-width="1.1"/>
<ellipse cx="16.5" cy="601.3" rx="9.5" ry="2" fill="#b0e8a0" stroke="#4a8a3a" stroke-width=".8"/><path d="M11.5 596 L12 600.5" stroke="#60b050" stroke-width="1.8"/>
<defs><linearGradient id="gbuck" x1="0" y1="0" x2="0" y2="1"><stop offset="0" stop-color="#c8dcf0"/><stop offset="1" stop-color="#4a78b0"/></linearGradient></defs>
<path d="M12 588.5 L22.5 583.2 Q26.2 582 27.6 586 L28 590.5 Q27.6 594.3 24 595.4 L14.5 598 Z" fill="url(#gbuck)" stroke="#1a2a3a" stroke-width="1"/>
<ellipse transform="translate(13 593) rotate(-18)" rx="2.6" ry="5" fill="#78c868" stroke="#1a2a3a" stroke-width=".9"/>
<path d="M13.5 587 L13.8 583.3 L17.5 582.8 M17 583 L17.3 590" stroke="#222" stroke-width=".9" fill="none"/>
<path d="M16 628 L20 632 L16 636 Z" fill="#2e3436"/>
<rect x="867" y="126" width="1" height="531" fill="#a8a8a6" />
<path d="M873 133 L888 133 L888 136 L876 136 L876 146 L873 148 Z" fill="#000"/><rect x="876" y="136" width="11" height="9" fill="#fff"/>
<path d="M873 148 Q878 146 882 142 L887 137 L888 139 L884 144 Q880 148 873 148Z" fill="#111"/><path d="M885.5 136 L888 134.5 L888 141 L886 141Z" fill="#f0a010"/>
<text x="887.96" y="145" font-size="13.5" fill="#2e3436" textLength="177.05" lengthAdjust="spacingAndGlyphs" >Fill and Stroke (Shift+Ctrl+F)</text>
<rect x="1153.5" y="135.5" width="10" height="9.5" rx="2" fill="none" stroke="#888" stroke-width="0.9"/><path d="M1156 140.2 L1161 137.7 L1161 142.7Z" fill="#888"/>
<rect x="1180.5" y="135.5" width="9.5" height="9.5" rx="2" fill="none" stroke="#888" stroke-width="0.9"/><path d="M1182.5 137.5 L1188 143 M1188 137.5 L1182.5 143" stroke="#888" stroke-width="1.6"/>
<rect x="873" y="154" width="325" height="1" fill="#a4a4a1" />
<rect x="873" y="154" width="1" height="374" fill="#a4a4a1" />
<rect x="873" y="527" width="325" height="1" fill="#a4a4a1" />
<rect x="872" y="533" width="326" height="1" fill="#b0b0ad" />
<rect x="878.5" y="186.5" width="316" height="257" fill="#fff" stroke="#b6b6b3" stroke-width="1"/>
<path d="M878.5 186.5 L878.5 162.5 Q878.5 159.5 881.5 159.5 L923.5 159.5 L923.5 186.5" fill="#efefee" stroke="#b6b6b3" stroke-width="1"/>
<path d="M1026.5 186.5 L1026.5 159.5 L1124.5 159.5 Q1127.5 159.5 1127.5 162.5 L1127.5 186.5" fill="#efefee" stroke="#b6b6b3" stroke-width="1"/>
<rect x="924" y="158" width="102" height="29" fill="#fff" />
<defs><linearGradient id="gfill" x1="0" y1="0" x2="1" y2="1"><stop offset="0" stop-color="#9ab8da"/><stop offset="1" stop-color="#e8f0f8"/></linearGradient></defs>
<rect x="885" y="168" width="11" height="10.5" fill="url(#gfill)" />
<text x="899.46" y="178" font-size="14" fill="#2e3436" textLength="18.66" lengthAdjust="spacingAndGlyphs" >Fill</text>
<rect x="930.5" y="167.5" width="11" height="10.5" fill="none" stroke="#333" stroke-width="1"/>
<text x="946.90" y="178" font-size="14" fill="#2e3436" textLength="71.99" lengthAdjust="spacingAndGlyphs" >Stroke paint</text>
<path d="M1031 170 H1040 M1031 174 H1034 M1036 174 H1038 M1031 178.3 H1042" stroke="#111" stroke-width="1.2"/><path d="M1039 168 L1042 170 L1039 172Z" fill="#111"/>
<text x="1047.40" y="178" font-size="14" fill="#2e3436" textLength="71.09" lengthAdjust="spacingAndGlyphs" >Stroke style</text>
<path d="M900 205.5 L909 214.5 M909 205.5 L900 214.5" stroke="#000" stroke-width="2.2"/>
<rect x="929.5" y="201.5" width="17.5" height="17" fill="#93b3d6" stroke="#111" stroke-width="1.2"/>
<defs><linearGradient id="glin" x1="0" y1="0" x2="1" y2="1"><stop offset="0" stop-color="#8eb0d6"/><stop offset="1" stop-color="#fff"/></linearGradient><radialGradient id="grad" cx=".5" cy=".5" r=".6"><stop offset="0" stop-color="#fff"/><stop offset="1" stop-color="#8eb0d6"/></radialGradient></defs>
<rect x="962" y="202" width="17" height="16.5" fill="url(#glin)"/><path d="M962 202.5 H978.5 V218.5" stroke="#333" stroke-width="1" fill="none"/><path d="M978.5 203 V218.5" stroke="#555" stroke-width="1.5"/>
<rect x="994" y="202" width="17" height="16.5" fill="url(#grad)"/><path d="M994 202.5 H1010.5 V218.5" stroke="#333" stroke-width="1" fill="none"/>
<rect x="1026.5" y="201.5" width="18.5" height="17" fill="#fff" stroke="#111" stroke-width="1.2"/>
<path d="M1030 203 L1033 206 L1030 209 L1027 206Z" fill="#9ab8d8"/>
<path d="M1036 203 L1039 206 L1036 209 L1033 206Z" fill="#9ab8d8"/>
<path d="M1042 203 L1045 206 L1042 209 L1039 206Z" fill="#9ab8d8"/>
<path d="M1033 208 L1036 211 L1033 214 L1030 211Z" fill="#9ab8d8"/>
<path d="M1039 208 L1042 211 L1039 214 L1036 211Z" fill="#9ab8d8"/>
<path d="M1030 213 L1033 216 L1030 219 L1027 216Z" fill="#9ab8d8"/>
<path d="M1036 213 L1039 216 L1036 219 L1033 216Z" fill="#9ab8d8"/>
<path d="M1042 213 L1045 216 L1042 219 L1039 216Z" fill="#9ab8d8"/>
<rect x="1060.5" y="201.5" width="18" height="17" fill="#93b3d6" stroke="#111" stroke-width="1.2"/><rect x="1063" y="204" width="13" height="12" fill="#fff"/><path d="M1076 204 V216 H1063" stroke="#555" stroke-width="1.6" fill="none"/>
<text x="1094.68" y="218.5" font-size="24.5" fill="#000" font-weight="bold" textLength="15.31" lengthAdjust="spacingAndGlyphs" >?</text>
<text x="886.42" y="248" font-size="13.5" fill="#2e3436" textLength="54.31" lengthAdjust="spacingAndGlyphs" stroke="#2e3436" stroke-width="0.45">No paint</text>
<rect x="878.5" y="449.5" width="310" height="33" rx="4" fill="#fff" stroke="#b6b6b3" stroke-width="1"/>
<rect x="1177" y="449" width="18" height="34" fill="#fff" />
<text x="884.48" y="472" font-size="14" fill="#1a1a1a" textLength="46.63" lengthAdjust="spacingAndGlyphs" >Blur (%)</text>
<text x="1149.60" y="472" font-size="14" fill="#1a1a1a" textLength="18.60" lengthAdjust="spacingAndGlyphs" >0.0</text>
<path d="M1182 461.5 L1190 461.5 L1186 456 Z" fill="#1a1a1a"/><path d="M1182.5 472 L1189.5 472 L1186 476 Z" fill="#a0a0a0"/>
<rect x="878.5" y="487.5" width="310" height="34" rx="4" fill="#fff" stroke="#b6b6b3" stroke-width="1"/>
<rect x="1177" y="487" width="18" height="35" fill="#fff" />
<rect x="881" y="490" width="293" height="29" fill="#4a90d9" />
<text x="885.40" y="511" font-size="14" fill="#ffffff" textLength="67.21" lengthAdjust="spacingAndGlyphs" >Opacity (%)</text>
<text x="1133.82" y="511" font-size="14" fill="#ffffff" textLength="34.37" lengthAdjust="spacingAndGlyphs" >100.0</text>
<path d="M1182.5 500 L1189.5 500 L1186 495 Z" fill="#a0a0a0"/><path d="M1182 512 L1190 512 L1186 517 Z" fill="#1a1a1a"/>
<defs><linearGradient id="gpage" x1="0" y1="0" x2="1" y2="1"><stop offset="0" stop-color="#fff"/><stop offset="1" stop-color="#d8d8d8"/></linearGradient><radialGradient id="glens" cx=".4" cy=".35" r=".7"><stop offset="0" stop-color="#fff"/><stop offset="1" stop-color="#a8c4e0"/></radialGradient></defs>
<path d="M1213.5 136.5 L1225 136.5 L1228.5 140 L1228.5 154.5 L1213.5 154.5 Z" fill="url(#gpage)" stroke="#999" stroke-width="1"/>
<path d="M1226 134.5 L1227.5 137.5 L1230.5 138 L1228.3 140.2 L1228.8 143.3 L1226 141.8 L1223.2 143.3 L1223.7 140.2 L1221.5 138 L1224.5 137.5Z" fill="#fff4a0" stroke="#e8c020" stroke-width="1.2"/>
<path d="M1212.5 171 L1218 171 L1219.5 172.5 L1228 172.5 L1228 184 L1212.5 184Z" fill="#8a7050" stroke="#5a4a30" stroke-width=".8"/><rect x="1215.5" y="174" width="11" height="8" fill="#f4f4f4" stroke="#777" stroke-width=".6"/><path d="M1210.5 179 L1230 179 L1228 186 L1212 186Z" fill="#b09878" stroke="#5a4a30" stroke-width=".8"/>
<rect x="1213.5" y="200.5" width="15" height="17" rx="1.5" fill="#e8e8e8" stroke="#777" stroke-width="1"/><rect x="1213.5" y="210" width="15" height="7.5" fill="#d0d0d0" stroke="#777" stroke-width="1"/><rect x="1217" y="213" width="8" height="2.5" fill="#fff" stroke="#555" stroke-width=".6"/>
<path d="M1219 200 L1223 200 L1223 205.5 L1226.5 205.5 L1221 211.5 L1215.5 205.5 L1219 205.5Z" fill="#50c030" stroke="#2a7a1a" stroke-width=".8"/>
<rect x="1211.8" y="233.6" width="18.6" height="11" rx="2" fill="#e6e6e6" stroke="#2a2a2a" stroke-width="1.3"/><rect x="1215" y="235" width="13" height="2.8" rx=".5" fill="#3a3a3a"/><g fill="#ccc"><rect x="1216" y="236" width="1" height="1"/><rect x="1218" y="236" width="1" height="1"/><rect x="1220" y="236" width="1" height="1"/></g><rect x="1213" y="239" width="16" height="2" fill="#fafafa"/>
<rect x="1215" y="242" width="10.5" height="1.2" fill="#111"/><rect x="1215" y="243" width="10.5" height="5" fill="#fafafa"/><path d="M1216.5 244 L1222 245 L1224 247" stroke="#8c8" stroke-width="1.2" fill="none"/><rect x="1213" y="248" width="15" height="2" fill="#111"/>
<rect x="1211" y="262" width="19" height="1" fill="#d0d0ce" />
<path d="M1217.5 276.5 L1225 276.5 L1228.5 280 L1228.5 292.5 L1217.5 292.5Z" fill="url(#gpage)" stroke="#333" stroke-width="1"/><path d="M1213 284.5 L1220 284.5" stroke="#111" stroke-width="1.4"/><path d="M1219.5 281.5 L1223 284.5 L1219.5 287.5Z" fill="#111"/>
<path d="M1213.5 307.5 L1221 307.5 L1224.5 311 L1224.5 323.5 L1213.5 323.5Z" fill="url(#gpage)" stroke="#333" stroke-width="1"/><path d="M1219 315.5 L1227 315.5" stroke="#111" stroke-width="1.4"/><path d="M1226 312.5 L1229.5 315.5 L1226 318.5Z" fill="#111"/>
<rect x="1211" y="337" width="19" height="1" fill="#d0d0ce" />
<path d="M1212 356 L1217.5 350.5 L1217.5 353.5 L1223 353.5 Q1230 354 1230 359.5 Q1230 365.5 1223.5 366 L1221.5 366 L1221.5 362.5 L1223 362.5 Q1226.5 362.3 1226.5 359.5 Q1226.5 357 1223 357 L1217.5 357 L1217.5 361.5 Z" fill="#f8d860" stroke="#c89810" stroke-width="1"/>
<path d="M1230 390 L1224.5 384 L1224.5 387 L1219 387 Q1212 387.5 1212 393 Q1212 398 1218.5 398.5 L1220.5 398.5 L1220.5 395 L1219 395 Q1215.5 394.8 1215.5 392.5 Q1215.5 390.5 1219 390.5 L1224.5 390.5 L1224.5 395.5 Z" fill="#b0d8a8" stroke="#2a8a2a" stroke-width="1" stroke-dasharray="1,0.6"/>
<rect x="1211" y="412" width="19" height="1" fill="#d0d0ce" />
<rect x="1212.5" y="425.5" width="10" height="11" fill="#f8f8f8" stroke="#555" stroke-width="1"/><path d="M1214.5 428.5 h6 M1214.5 431 h6 M1214.5 433.5 h4" stroke="#777" stroke-width=".8"/><rect x="1218.5" y="431.5" width="11" height="12" fill="#f8f8f8" stroke="#555" stroke-width="1"/><path d="M1220.5 435 h7 M1220.5 437.5 h7 M1220.5 440 h5" stroke="#777" stroke-width=".8"/>
<path d="M1215 456 L1222 468 M1229 456 L1222 468" stroke="#aaa" stroke-width="2.6"/><path d="M1215 456 L1222 468 M1229 456 L1222 468" stroke="#f4f4f4" stroke-width="1.2"/>
<circle cx="1217" cy="471" r="3.2" fill="none" stroke="#d01010" stroke-width="2.2"/><circle cx="1226" cy="471" r="3.2" fill="none" stroke="#d01010" stroke-width="2.2"/>
<rect x="1212.5" y="489.5" width="14" height="16" rx="1" fill="#e0b070" stroke="#a07840" stroke-width="1"/><rect x="1216" y="488" width="7" height="3.5" fill="#eee" stroke="#666" stroke-width=".8"/><rect x="1219.5" y="495.5" width="11" height="11" fill="#fafafa" stroke="#555" stroke-width="1"/><path d="M1221.5 499 h7 M1221.5 501.5 h7 M1221.5 504 h5" stroke="#777" stroke-width=".8"/>
<rect x="1211" y="518" width="19" height="1" fill="#d0d0ce" />
<path d="M1225 544.5 L1229 548.5" stroke="#111" stroke-width="2.2"/><circle cx="1220.5" cy="539.5" r="7.3" fill="url(#glens)" stroke="#111" stroke-width="1.4"/>
<rect x="1216.5" y="535.5" width="8" height="7.5" fill="#fff" stroke="#222" stroke-width="1" stroke-dasharray="1.3,1"/>
<path d="M1225 576.5 L1229 580.5" stroke="#111" stroke-width="2.2"/><circle cx="1220.5" cy="571.5" r="7.3" fill="url(#glens)" stroke="#111" stroke-width="1.4"/>
<rect x="1216" y="566.5" width="5.5" height="5.5" fill="#f0d060" stroke="#333" stroke-width=".8"/><rect x="1219.5" y="570.0" width="5.5" height="5.5" fill="#f0d060" stroke="#333" stroke-width=".8"/>
<path d="M1225 608.5 L1229 612.5" stroke="#111" stroke-width="2.2"/><circle cx="1220.5" cy="603.5" r="7.3" fill="url(#glens)" stroke="#111" stroke-width="1.4"/>
<rect x="1216.5" y="599.0" width="8" height="8.5" fill="#f4f4f4" stroke="#222" stroke-width="1.1"/>
<path d="M1219 629 L1224 633 L1219 637Z" fill="#2e3436"/>
<rect x="1238" y="126" width="1" height="530" fill="#e8e8e7" />
<rect x="1245.5" y="130.5" width="29" height="29" rx="4" fill="url(#btng)" stroke="#a9a9a6" stroke-width="1"/>
<path d="M1257.0 142.0 L1262.5 147.5" stroke="#000" stroke-width="1.2"/><path d="M1261.0 148.5 L1264.5 149.5 L1263.5 146.0Z" fill="#000"/>
<path d="M1254.5 136.5 L1257.5 139.5 L1254.5 142.5 L1251.5 139.5Z" fill="#b0b0f8" stroke="#0000ee" stroke-width="1.2"/><path d="M1265.5 147.5 L1268.5 150.5 L1265.5 153.5 L1262.5 150.5Z" fill="#c8c8f0" stroke="#008800" stroke-width="1.2"/>
<rect x="1250" y="166" width="20" height="1" fill="#d0d0ce" />
<path d="M1257.0 186.5 L1262.5 192" stroke="#000" stroke-width="1.2"/><path d="M1261.0 193 L1264.5 194 L1263.5 190.5Z" fill="#000"/>
<path d="M1254.5 181 L1257.5 184 L1254.5 187 L1251.5 184Z" fill="#b0b0f8" stroke="#0000ee" stroke-width="1.2"/><path d="M1265.5 192 L1268.5 195 L1265.5 198 L1262.5 195Z" fill="#c8c8f0" stroke="#008800" stroke-width="1.2"/>
<g stroke="#333" stroke-width="1" stroke-dasharray="1,1.2" fill="none"><path d="M1252 226.5 H1268 M1267.5 211 V226"/><path d="M1252 258.5 H1266 M1266.5 244 V258"/><path d="M1252 290.5 H1266 M1266.5 279 V290"/><path d="M1252 323.5 H1267 M1267.5 308 V323"/></g>
<path d="M1266.5 255 L1269.5 258.5 L1266.5 262 L1263.5 258.5Z" fill="#c8c8f0" stroke="#2a7a2a" stroke-width="1"/><path d="M1265.5 277 L1268.5 280.5 L1265.5 284 L1262.5 280.5Z" fill="#c8c8f0" stroke="#2a7a2a" stroke-width="1"/><path d="M1256.5 310 L1258.5 312.5 L1256.5 315 L1254.5 312.5Z" fill="#c8c8f0" stroke="#2a7a2a" stroke-width=".8"/>
<rect x="1250" y="337" width="20" height="1" fill="#d0d0ce" />
<rect x="1245.5" y="344.5" width="29" height="29" rx="4" fill="url(#btng)" stroke="#a9a9a6" stroke-width="1"/>
<path d="M1257.0 356.0 L1262.5 361.5" stroke="#000" stroke-width="1.2"/><path d="M1261.0 362.5 L1264.5 363.5 L1263.5 360.0Z" fill="#000"/>
<path d="M1254.5 350.5 L1257.5 353.5 L1254.5 356.5 L1251.5 353.5Z" fill="#b0b0f8" stroke="#0000ee" stroke-width="1.2"/><path d="M1265.5 361.5 L1268.5 364.5 L1265.5 367.5 L1262.5 364.5Z" fill="#c8c8f0" stroke="#008800" stroke-width="1.2"/>
<path d="M1253 384 Q1268 387 1267 397 Q1262 398 1261 398" stroke="#108010" stroke-width="1.5" fill="none"/>
<path d="M1252 430 L1269 415 M1252 425 L1269 419" stroke="#444" stroke-width="1"/><circle cx="1260.5" cy="422.5" r="2" fill="#8888f0" stroke="#108010" stroke-width="1.2"/>
<path d="M1253 448 Q1262 450 1264 458 L1268 455" stroke="#444" stroke-width="1" fill="none"/><rect x="1258.5" y="458" width="4" height="4" fill="#8888f0" stroke="#108010" stroke-width="1"/>
<path d="M1252 478 Q1258 478 1259 481 Q1262 490 1264 491 L1268 488" stroke="#444" stroke-width="1" fill="none"/><rect x="1257" y="480" width="4.5" height="4.5" fill="#8888f0" stroke="#108010" stroke-width="1"/>
<path d="M1252 527 L1269 512" stroke="#444" stroke-width="1"/><path d="M1254 521 L1257 527 M1256 519 L1259 525 M1264 512 L1267 518 M1266 510 L1269 516" stroke="#d01010" stroke-width="1.2"/><circle cx="1260.5" cy="519.5" r="1.8" fill="#8888f0" stroke="#108010" stroke-width="1.1"/>
<rect x="1250" y="539" width="20" height="1" fill="#d0d0ce" />
<rect x="1245.5" y="547.5" width="29" height="29" rx="4" fill="url(#btng)" stroke="#a9a9a6" stroke-width="1"/>
<path d="M1257.5 558.5 L1263 564" stroke="#000" stroke-width="1.2"/><path d="M1261.5 565 L1265 566 L1264 562.5Z" fill="#000"/>
<path d="M1255 553 L1258 556 L1255 559 L1252 556Z" fill="#b0b0f8" stroke="#0000ee" stroke-width="1.2"/><path d="M1266 564 L1269 567 L1266 570 L1263 567Z" fill="#c8c8f0" stroke="#008800" stroke-width="1.2"/>
<path d="M1251.5 597.5 H1265.5 V585" stroke="#777" stroke-width="1.2" fill="none"/><path d="M1255 591 Q1257 588.5 1259 591" stroke="#108010" stroke-width="1.4" fill="none"/>
<path d="M1258.5 629 L1263.5 633 L1258.5 637Z" fill="#2e3436"/>
<rect x="1" y="658" width="15" height="15" fill="#fff" />
<path d="M1.5 658.5 L15.5 672.5 M15.5 658.5 L1.5 672.5" stroke="#8b1010" stroke-width="1.2"/>
<rect x="16" y="658" width="15" height="15" fill="#000000" />
<rect x="31" y="658" width="15" height="15" fill="#1a1a1a" />
<rect x="46" y="658" width="15" height="15" fill="#333333" />
<rect x="61" y="658" width="15" height="15" fill="#4d4d4d" />
<rect x="76" y="658" width="15" height="15" fill="#666666" />
<rect x="91" y="658" width="15" height="15" fill="#808080" />
<rect x="106" y="658" width="15" height="15" fill="#999999" />
<rect x="121" y="658" width="15" height="15" fill="#b3b3b3" />
<rect x="136" y="658" width="15" height="15" fill="#cccccc" />
<rect x="151" y="658" width="15" height="15" fill="#e6e6e6" />
<rect x="166" y="658" width="15" height="15" fill="#ececec" />
<rect x="181" y="658" width="15" height="15" fill="#f2f2f2" />
<rect x="196" y="658" width="15" height="15" fill="#f9f9f9" />
<rect x="211" y="658" width="15" height="15" fill="#ffffff" />
<rect x="226" y="658" width="15" height="15" fill="#800000" />
<rect x="241" y="658" width="15" height="15" fill="#ff0000" />
<rect x="256" y="658" width="15" height="15" fill="#808000" />
<rect x="271" y="658" width="15" height="15" fill="#ffff00" />
<rect x="286" y="658" width="15" height="15" fill="#008000" />
<rect x="301" y="658" width="15" height="15" fill="#00ff00" />
<rect x="316" y="658" width="15" height="15" fill="#008080" />
<rect x="331" y="658" width="15" height="15" fill="#00ffff" />
<rect x="346" y="658" width="15" height="15" fill="#000080" />
<rect x="361" y="658" width="15" height="15" fill="#0000ff" />
<rect x="376" y="658" width="15" height="15" fill="#800080" />
<rect x="391" y="658" width="15" height="15" fill="#ff00ff" />
<rect x="406" y="658" width="15" height="15" fill="#2b0000" />
<rect x="421" y="658" width="15" height="15" fill="#550000" />
<rect x="436" y="658" width="15" height="15" fill="#800000" />
<rect x="451" y="658" width="15" height="15" fill="#aa0000" />
<rect x="466" y="658" width="15" height="15" fill="#d40000" />
<rect x="481" y="658" width="15" height="15" fill="#ff0000" />
<rect x="496" y="658" width="15" height="15" fill="#ff2a2a" />
<rect x="511" y="658" width="15" height="15" fill="#ff5555" />
<rect x="526" y="658" width="15" height="15" fill="#ff8080" />
<rect x="541" y="658" width="15" height="15" fill="#ffaaaa" />
<rect x="556" y="658" width="15" height="15" fill="#ffd5d5" />
<rect x="571" y="658" width="15" height="15" fill="#280b0b" />
<rect x="586" y="658" width="15" height="15" fill="#501616" />
<rect x="601" y="658" width="15" height="15" fill="#782121" />
<rect x="616" y="658" width="15" height="15" fill="#a02c2c" />
<rect x="631" y="658" width="15" height="15" fill="#c83737" />
<rect x="646" y="658" width="15" height="15" fill="#d35f5f" />
<rect x="661" y="658" width="15" height="15" fill="#de8787" />
<rect x="676" y="658" width="15" height="15" fill="#e9afaf" />
<rect x="691" y="658" width="15" height="15" fill="#f4d7d7" />
<rect x="706" y="658" width="15" height="15" fill="#241c1c" />
<rect x="721" y="658" width="15" height="15" fill="#483737" />
<rect x="736" y="658" width="15" height="15" fill="#6c5353" />
<rect x="751" y="658" width="15" height="15" fill="#916f6f" />
<rect x="766" y="658" width="15" height="15" fill="#ac9393" />
<rect x="781" y="658" width="15" height="15" fill="#c8b7b7" />
<rect x="796" y="658" width="15" height="15" fill="#e3dbdb" />
<rect x="811" y="658" width="15" height="15" fill="#2b1100" />
<rect x="826" y="658" width="15" height="15" fill="#552200" />
<rect x="841" y="658" width="15" height="15" fill="#803300" />
<rect x="856" y="658" width="15" height="15" fill="#aa4400" />
<rect x="871" y="658" width="15" height="15" fill="#d45500" />
<rect x="886" y="658" width="14" height="15" fill="#ff6600" />
<rect x="900" y="658" width="15" height="15" fill="#ff7f2a" />
<rect x="915" y="658" width="15" height="15" fill="#ff9955" />
<rect x="930" y="658" width="15" height="15" fill="#ffb380" />
<rect x="945" y="658" width="15" height="15" fill="#ffccaa" />
<rect x="960" y="658" width="15" height="15" fill="#ffe6d5" />
<rect x="975" y="658" width="15" height="15" fill="#28170b" />
<rect x="990" y="658" width="15" height="15" fill="#502d16" />
<rect x="1005" y="658" width="15" height="15" fill="#784421" />
<rect x="1020" y="658" width="15" height="15" fill="#a05a2c" />
<rect x="1035" y="658" width="15" height="15" fill="#c87137" />
<rect x="1050" y="658" width="15" height="15" fill="#d38d5f" />
<rect x="1065" y="658" width="15" height="15" fill="#deaa87" />
<rect x="1080" y="658" width="15" height="15" fill="#e9c6af" />
<rect x="1095" y="658" width="15" height="15" fill="#f4e3d7" />
<rect x="1110" y="658" width="15" height="15" fill="#241f1c" />
<rect x="1125" y="658" width="15" height="15" fill="#483e37" />
<rect x="1140" y="658" width="15" height="15" fill="#6c5d53" />
<rect x="1155" y="658" width="15" height="15" fill="#917c6f" />
<rect x="1170" y="658" width="15" height="15" fill="#ac9d93" />
<rect x="1185" y="658" width="15" height="15" fill="#c8beb7" />
<rect x="1200" y="658" width="15" height="15" fill="#e3dedb" />
<rect x="1215" y="658" width="15" height="15" fill="#2b2200" />
<rect x="1230" y="658" width="15" height="15" fill="#554400" />
<rect x="1245" y="658" width="15" height="15" fill="#806600" />
<rect x="1260" y="658" width="8" height="15" fill="#aa8800" />
<path d="M1276 660.5 L1271.5 665.5 L1276 670.5Z" fill="#2e3436"/>
<rect x="0" y="675" width="1269" height="12" fill="#c3c4c2" />
<rect x="3" y="678" width="242" height="6" rx="3" fill="#7b7e7e"/>
<text x="2.50" y="700" font-size="11" fill="#2e3436" textLength="15.85" lengthAdjust="spacingAndGlyphs" >Fill:</text>
<text x="44.70" y="700" font-size="11" fill="#2e3436" textLength="5.10" lengthAdjust="spacingAndGlyphs" >L</text>
<defs><pattern id="chk" x="55" y="689" width="11" height="10" patternUnits="userSpaceOnUse"><rect width="11" height="10" fill="#a8a8a8"/><rect width="5.5" height="5" fill="#6e6e6e"/><rect x="5.5" y="5" width="5.5" height="5" fill="#6e6e6e"/></pattern><linearGradient id="chkfade" x1="0" x2="1"><stop offset="0" stop-color="#e8e8e7" stop-opacity="1"/><stop offset="0.75" stop-color="#e8e8e7" stop-opacity="0"/></linearGradient></defs>
<rect x="55" y="689" width="59" height="15" fill="url(#chk)" />
<rect x="55" y="689" width="59" height="15" fill="url(#chkfade)" />
<text x="2.50" y="714.5" font-size="11" fill="#2e3436" textLength="34.05" lengthAdjust="spacingAndGlyphs" >Stroke:</text>
<text x="65.00" y="714.5" font-size="11" fill="#2e3436" font-style="italic" textLength="22.90" lengthAdjust="spacingAndGlyphs" >None</text>
<text x="118.30" y="707.5" font-size="12" fill="#2e3436" textLength="12.02" lengthAdjust="spacingAndGlyphs" >O:</text>
<rect x="133.5" y="690.5" width="41" height="28" rx="3" fill="#fff" stroke="#b9b9b6" stroke-width="1"/>
<rect x="161" y="691" width="1" height="27" fill="#e4e4e2" />
<rect x="161" y="704" width="13" height="1" fill="#e4e4e2" />
<path d="M163.0 698.5 L172.0 698.5 L170.5 697 L167.5 695.5 L164.5 697 Z" fill="#2e3436"/>
<path d="M163.0 710.5 L172.0 710.5 L170.5 712 L167.5 713.5 L164.5 712 Z" fill="#2e3436"/>
<rect x="159" y="692" width="2" height="25" fill="#fff"/>
<text x="141.00" y="708" font-size="13" fill="#1a1a1a" textLength="17.18" lengthAdjust="spacingAndGlyphs" >100</text>
<rect x="161" y="691" width="1" height="27" fill="#e4e4e2" />
<rect x="178" y="689" width="1" height="31" fill="#d3d3d1" />
<path d="M163.5 698.5 L172.5 698.5 L171 697 L168 695.5 L165 697 Z" fill="#b0b0b0"/>
<ellipse cx="190" cy="703.5" rx="5" ry="3.5" fill="#fff" stroke="#111" stroke-width="1.2"/><circle cx="190" cy="704" r="2.3" fill="#111"/><path d="M185.5 700 l-1 -1.5 M188 699 l-.3 -1.8 M191 699 l.3 -1.8 M194 700 l1 -1.5" stroke="#111" stroke-width=".9"/>
<path d="M208 703 L208 701 Q208 699 210.5 699 Q213 699 213 701" fill="none" stroke="#333" stroke-width="1.1"/><rect x="207" y="703" width="8.5" height="5.5" fill="#f0d040" stroke="#333" stroke-width="1"/>
<rect x="222.5" y="690.5" width="82" height="27" rx="4" fill="url(#btng2)" stroke="#b0b0ad" stroke-width="1"/>
<defs><linearGradient id="btng2" x1="0" y1="0" x2="0" y2="1"><stop offset="0" stop-color="#e8e8e6"/><stop offset="1" stop-color="#dcdcda"/></linearGradient></defs>
<text x="231.40" y="708" font-size="14" fill="#2e3436" textLength="42.82" lengthAdjust="spacingAndGlyphs" >•Layer 1</text>
<path d="M286.5 701.5 L294.5 701.5 L290.5 706.5Z" fill="#2e3436"/>
<text x="312.20" y="708.75" font-size="14" fill="#2e3436" font-weight="bold" textLength="62.60" lengthAdjust="spacingAndGlyphs" >Rectangle</text>
<text x="383.75" y="708.75" font-size="14" fill="#2e3436" textLength="42.18" lengthAdjust="spacingAndGlyphs" >in layer</text>
<text x="432.00" y="708.75" font-size="14" fill="#2e3436" font-weight="bold" textLength="45.30" lengthAdjust="spacingAndGlyphs" >Layer 1</text>
<text x="477.02" y="708.75" font-size="14" fill="#2e3436" textLength="292.60" lengthAdjust="spacingAndGlyphs" >. Click selection to toggle scale/rotation handles.</text>
<rect x="1129" y="689" width="1" height="31" fill="#d3d3d1" />
<text x="1132.30" y="699.5" font-size="11" fill="#2e3436" textLength="8.55" lengthAdjust="spacingAndGlyphs" >X:</text>
<text x="1144.30" y="699.5" font-size="11" fill="#2e3436" textLength="44.43" lengthAdjust="spacingAndGlyphs" >1211.43</text>
<text x="1132.30" y="715" font-size="11" fill="#2e3436" textLength="8.55" lengthAdjust="spacingAndGlyphs" >Y:</text>
<text x="1150.60" y="715" font-size="11" fill="#2e3436" textLength="38.13" lengthAdjust="spacingAndGlyphs" >825.71</text>
<text x="1197.70" y="708" font-size="12" fill="#2e3436" textLength="8.77" lengthAdjust="spacingAndGlyphs" >Z:</text>
<rect x="1210.5" y="690.5" width="50" height="28" rx="3" fill="#fff" stroke="#b9b9b6" stroke-width="1"/>
<rect x="1247" y="691" width="1" height="27" fill="#e4e4e2" />
<rect x="1247" y="704" width="13" height="1" fill="#e4e4e2" />
<path d="M1249.0 698.5 L1258.0 698.5 L1256.5 697 L1253.5 695.5 L1250.5 697 Z" fill="#2e3436"/>
<path d="M1249.0 710.5 L1258.0 710.5 L1256.5 712 L1253.5 713.5 L1250.5 712 Z" fill="#2e3436"/>
<text x="1225.20" y="708" font-size="13" fill="#1a1a1a" textLength="17.31" lengthAdjust="spacingAndGlyphs" >35%</text>
<rect x="1243" y="692" width="4" height="25" fill="#fff"/>
</svg>
</body></html>
